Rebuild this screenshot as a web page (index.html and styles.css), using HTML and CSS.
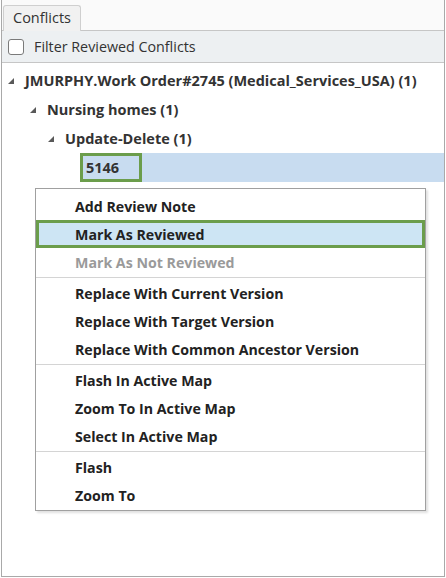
FILE: index.html
```html
<!DOCTYPE html>
<html lang="en">
<head>
  <meta charset="UTF-8" />
  <title>Conflicts</title>
  <link rel="stylesheet" href="styles.css">
</head>
<body>
  <div class="panel">
    <div class="tabs">
      <div class="tab">Conflicts</div>
    </div>
    <div class="toolbar">
      <span class="check"></span>
      <span class="label">Filter Reviewed Conflicts</span>
    </div>
    <div class="tree">
      <div class="node lvl1"><span class="arrow"></span>JMURPHY.Work Order#2745 (Medical_Services_USA) (1)</div>
      <div class="node lvl2"><span class="arrow"></span>Nursing homes (1)</div>
      <div class="node lvl3"><span class="arrow"></span>Update-Delete (1)</div>
      <div class="node leaf"><span class="oid">5146</span></div>
    </div>

    <div class="menu">
      <div class="item">Add Review Note</div>
      <div class="item active">Mark As Reviewed</div>
      <div class="item disabled">Mark As Not Reviewed</div>
      <div class="sep"></div>
      <div class="item">Replace With Current Version</div>
      <div class="item">Replace With Target Version</div>
      <div class="item">Replace With Common Ancestor Version</div>
      <div class="sep"></div>
      <div class="item">Flash In Active Map</div>
      <div class="item">Zoom To In Active Map</div>
      <div class="item">Select In Active Map</div>
      <div class="sep"></div>
      <div class="item">Flash</div>
      <div class="item">Zoom To</div>
    </div>
  </div>
</body>
</html>
```

FILE: styles.css
```css
body {
  margin: 0;
  background: #fff;
  font-family: 'Open Sans', 'Noto Sans', sans-serif;
  color: #333;
}
.panel {
  position: relative;
  width: 444px;
  height: 577px;
  margin-left: 1px;
  box-sizing: border-box;
  border: 1px solid #a9a9a9;
  border-top: none;
}
.tabs {
  height: 30px;
  background: #fafafa;
  border-bottom: 1px solid #c6c6c6;
  display: flex;
  align-items: flex-end;
  padding-left: 1px;
}
.tab {
  width: 78px;
  height: 26px;
  margin-bottom: -1px;
  box-sizing: border-box;
  background: #f1f1f1;
  border: 1px solid #cfcfcf;
  border-bottom: none;
  border-radius: 3px 3px 0 0;
  font-size: 14.5px;
  color: #333;
  padding: 2px 0 0 9px;
}
.toolbar {
  height: 31px;
  background: #edf0f2;
  border-bottom: 1px solid #c6c6c6;
  display: flex;
  align-items: center;
  padding-left: 6px;
}
.check {
  width: 14px;
  height: 14px;
  border: 1px solid #7a7a7a;
  border-radius: 3px;
  background: #fff;
  margin-right: 10px;
}
.label {
  font-size: 14.3px;
  color: #333;
}
.tree {
  padding-top: 3px;
}
.node {
  height: 29px;
  display: flex;
  align-items: center;
  font-weight: bold;
  font-size: 14.5px;
  color: #333;
}
.arrow {
  width: 0;
  height: 0;
  border-left: 6px solid transparent;
  border-bottom: 6px solid #595959;
  margin-right: 11px;
}
.lvl1 { padding-left: 6px; }
.lvl2 { padding-left: 28px; }
.lvl3 { padding-left: 46px; }
.leaf {
  margin-left: 78px;
  background: #c8dcf0;
}
.oid {
  width: 62px;
  height: 29px;
  box-sizing: border-box;
  border: 3px solid #6b9d4b;
  padding-left: 3px;
  display: flex;
  align-items: center;
}
.menu {
  position: absolute;
  left: 33px;
  top: 188px;
  width: 389px;
  padding: 3px 0 1px;
  background: #fff;
  border: 1px solid #a0a0a0;
  box-shadow: 2px 2px 2px rgba(0, 0, 0, 0.12);
}
.item {
  height: 28px;
  box-sizing: border-box;
  display: flex;
  align-items: center;
  padding-left: 39px;
  font-weight: bold;
  font-size: 14.2px;
  color: #222;
}
.item.active {
  background: #cde5f4;
  border: 3px solid #6b9d4b;
  padding-left: 36px;
}
.item.disabled {
  color: #9a9a9a;
}
.sep {
  height: 1px;
  background: #d4d4d4;
  margin: 1px 0;
}
```
